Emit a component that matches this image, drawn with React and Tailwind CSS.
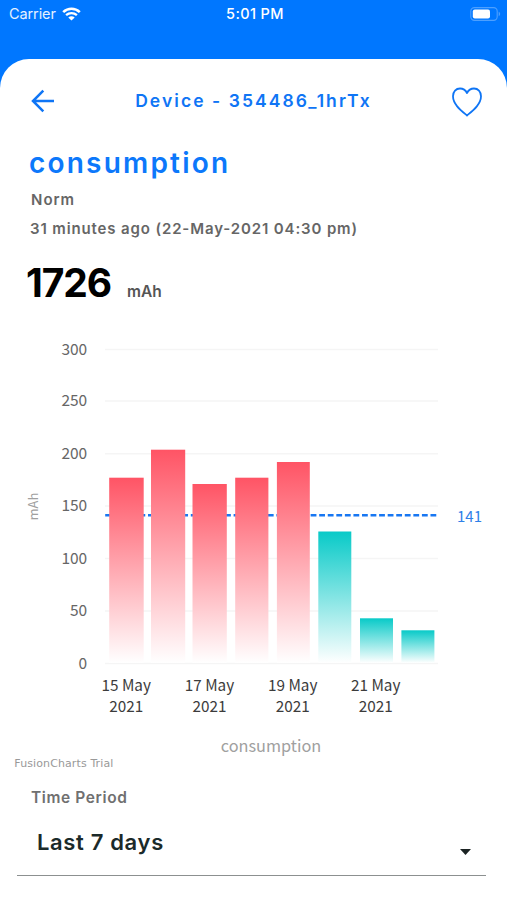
const bars = [
  { x: 109.2, w: 34.5, top: 477.7, over: true },
  { x: 151, w: 34.2, top: 449.7, over: true },
  { x: 192.5, w: 34.3, top: 484, over: true },
  { x: 235.2, w: 33.2, top: 477.7, over: true },
  { x: 276.9, w: 32.9, top: 462, over: true },
  { x: 318.3, w: 33, top: 531.5, over: false },
  { x: 360, w: 33, top: 618.3, over: false },
  { x: 401.4, w: 33, top: 630.3, over: false },
];

const ticks = [
  { value: 300, y: 349.5 },
  { value: 250, y: 401 },
  { value: 200, y: 453.8 },
  { value: 150, y: 506 },
  { value: 100, y: 558.5 },
  { value: 50, y: 611 },
  { value: 0, y: 663.5 },
];

const days = [
  { label: '15 May', x: 126.2 },
  { label: '17 May', x: 209.5 },
  { label: '19 May', x: 292.7 },
  { label: '21 May', x: 375.7 },
];

const StatusBar = () => (
  <div className="flex h-[27px] items-center justify-between pl-[9px] pr-[6px] text-[14.5px] text-white">
    <div className="flex w-[120px] items-center gap-[6px]">
      <span className="text-[14.5px] tracking-[-0.1px] text-white/90">Carrier</span>
      <svg width="19" height="14" viewBox="0 0 19 14" fill="none">
        <path d="M1.2 5.1C6 0.6 13 0.6 17.8 5.1" stroke="#fff" strokeWidth="2.6" />
        <path d="M4.1 8.2C7.2 5.3 11.8 5.3 14.9 8.2" stroke="#fff" strokeWidth="2.3" />
        <path d="M9.5 13.6L6.3 10.4C8.1 8.7 10.9 8.7 12.7 10.4Z" fill="#fff" />
      </svg>
    </div>
    <span className="font-medium tracking-[0.4px]">5:01 PM</span>
    <div className="flex w-[120px] justify-end">
      <svg width="31" height="14" viewBox="0 0 31 14" fill="none">
        <rect x="0.8" y="0.6" width="26.4" height="12.8" rx="3.6" stroke="#4da0ff" strokeWidth="1.1" />
        <rect x="2.8" y="2.4" width="17.2" height="9.2" rx="2" fill="#fff" />
        <path d="M28.7 4.8C30.6 5.5 30.6 8.5 28.7 9.2Z" fill="#4da0ff" />
      </svg>
    </div>
  </div>
);

const ConsumptionChart = () => (
  <svg
    className="block font-['Noto_Sans_CJK_SC',sans-serif]"
    width="507"
    height="450"
    viewBox="0 325 507 450"
  >
    <defs>
      <linearGradient id="over" x1="0" y1="0" x2="0" y2="1">
        <stop offset="0" stopColor="#ff5465" />
        <stop offset="1" stopColor="#ffffff" />
      </linearGradient>
      <linearGradient id="under" x1="0" y1="0" x2="0" y2="1">
        <stop offset="0" stopColor="#08cac8" />
        <stop offset="1" stopColor="#ffffff" />
      </linearGradient>
    </defs>

    {ticks.map((t) => (
      <g key={t.value}>
        <line x1="105" x2="438" y1={t.y} y2={t.y} stroke="#f5f5f5" strokeWidth="1.5" />
        <text x="87.2" y={t.y + 5} textAnchor="end" fontSize="15.5" fill="#666">{t.value}</text>
      </g>
    ))}

    <line x1="105.2" x2="437" y1="515.3" y2="515.3" stroke="#1877f2" strokeWidth="2.4" strokeDasharray="5.8 2.76" />
    <text x="457" y="521.7" fontSize="15" fill="#2f80e8">141</text>

    {bars.map((b) => (
      <rect key={b.x} x={b.x} y={b.top} width={b.w} height={663 - b.top} fill={b.over ? 'url(#over)' : 'url(#under)'} />
    ))}

    {days.map((d) => (
      <g key={d.label} textAnchor="middle" fontSize="15.3" fill="#3c3c3c">
        <text x={d.x} y="691.3">{d.label}</text>
        <text x={d.x} y="712">2021</text>
      </g>
    ))}

    <text transform="translate(38 506.5) rotate(-90)" textAnchor="middle" fontSize="13" fill="#a0a0a0">mAh</text>
    <text x="271" y="752.3" textAnchor="middle" fontSize="16.3" fill="#a0a0a0">consumption</text>
    <text x="14.3" y="767" className="font-['DejaVu_Sans',sans-serif]" fontSize="11" fill="#999" textLength="99">FusionCharts Trial</text>
  </svg>
);

const App = () => {
  return (
    <div className="h-[900px] w-[507px] overflow-hidden bg-[#0077ff] font-['Inter',sans-serif]">
      <StatusBar />
      <main className="mt-8 h-[841px] rounded-t-[29px] bg-white">
        {/* Header */}
        <header className="flex h-[84px] items-center justify-between pl-[31px] pr-[25px]">
          <svg width="24" height="24" viewBox="0 0 24 24" fill="none" stroke="#0f75f5" strokeWidth="2.5">
            <path d="M23 12H2M12.3 1.7L2 12L12.3 22.3" />
          </svg>
          <h1 className="whitespace-nowrap pt-px text-[17.5px] font-semibold tracking-[2.07px] text-[#0f75f5]">Device - 354486_1hrTx</h1>
          <svg className="mt-[2px]" width="30" height="30" viewBox="0 0 30 30" fill="none" stroke="#0f75f5" strokeWidth="1.8" strokeLinejoin="round">
            <path d="M15 28.5C9.5 23.8 1 17.5 1 9.3C1 4.7 4 1.5 8 1.5C11.2 1.5 13.6 3.2 15 6C16.4 3.2 18.8 1.5 22 1.5C26 1.5 29 4.7 29 9.3C29 17.5 20.5 23.8 15 28.5Z" />
          </svg>
        </header>

        {/* Reading */}
        <section className="h-[182px] whitespace-nowrap">
          <h2 className="pl-[29px] text-[28px] leading-[41px] font-semibold tracking-[2.2px] text-[#0c78fb]">consumption</h2>
          <p className="pl-[31px] pt-[3px] text-[15px] leading-[25px] font-semibold tracking-[1px] text-[#666]">Norm</p>
          <p className="pl-[30px] pt-[5px] text-[15px] leading-[24px] font-semibold tracking-[0.87px] text-[#666]">31 minutes ago (22-May-2021 04:30 pm)</p>
          <div className="flex items-baseline gap-[16px] pl-[26px] pt-[17px]">
            <span className="text-[39px] leading-[50px] font-bold tracking-[-1.1px] text-black">1726</span>
            <span className="text-[15.5px] font-semibold text-[#555]">mAh</span>
          </div>
        </section>

        <ConsumptionChart />

        {/* Time period */}
        <section className="flex flex-col">
          <label className="pl-[31px] pt-[12px] text-[15.5px] leading-[22px] font-semibold tracking-[0.6px] text-[#707070]">Time Period</label>
          <button className="mr-[21px] ml-[17px] mt-[13px] flex h-[54px] items-center justify-between border-b border-[#8c9090] pl-[20px] pr-[15px]">
            <span className="pb-[12px] text-[22px] font-semibold tracking-[0.65px] text-[#1b2a2a]">Last 7 days</span>
            <svg className="mt-[6px]" width="11" height="6" viewBox="0 0 11 6">
              <path d="M0 0H11L5.5 6Z" fill="#1b2323" />
            </svg>
          </button>
        </section>
      </main>
    </div>
  );
};

export default App;
